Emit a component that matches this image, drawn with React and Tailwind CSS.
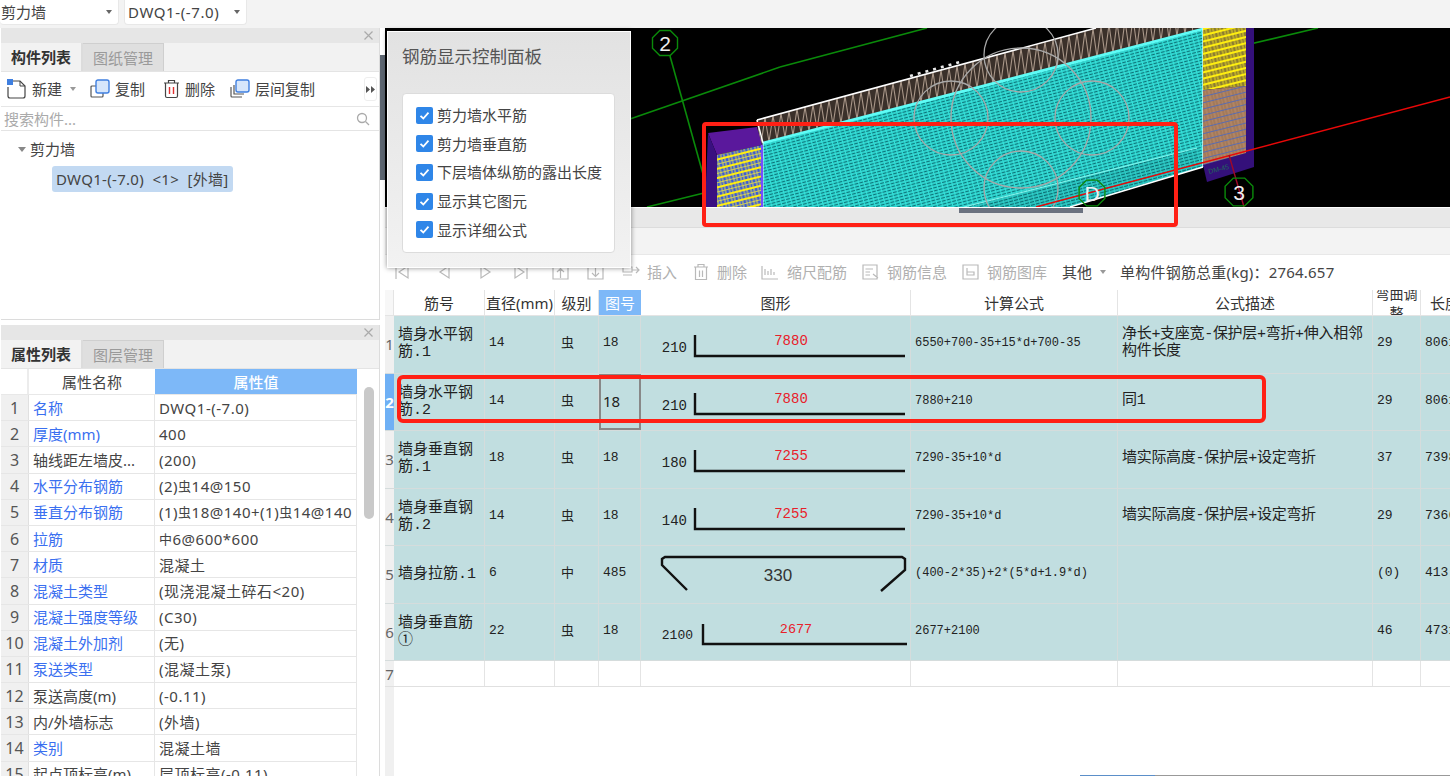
import React from "react";

const zig = () => {
  const pts = [];
  for (let i = 0; i < 110; i++) {
    const x = 372 + i * 4;
    const y = i % 2 === 0 ? 92 - (x - 372) * 0.271 : 115 - (x - 378) * 0.257;
    pts.push(`${x.toFixed(1)},${y.toFixed(1)}`);
  }
  return pts.join(" ");
};

const octagon = (cx, cy, r) => {
  const pts = [];
  for (let i = 0; i < 8; i++) {
    const a = Math.PI / 8 + (i * Math.PI) / 4;
    pts.push(`${(cx + r * Math.cos(a)).toFixed(1)},${(cy + r * Math.sin(a)).toFixed(1)}`);
  }
  return pts.join(" ");
};

function Canvas() {
  return (
    <svg width="1065" height="179" viewBox="0 0 1065 179" className="block bg-black">
      <defs>
        <pattern id="mesh" width="10" height="6" patternUnits="userSpaceOnUse" patternTransform="rotate(-15)">
          <rect width="10" height="6" fill="#0a7478" />
          <path d="M0 1H10M0 4H10" stroke="#3cf0e8" strokeWidth="1.5" />
          <path d="M2.5 0V6M7.5 0V6" stroke="#34e2da" strokeWidth="1.2" />
        </pattern>
        <pattern id="meshDark" width="10" height="6" patternUnits="userSpaceOnUse" patternTransform="rotate(-15)">
          <rect width="10" height="6" fill="#0a6c70" />
          <path d="M0 1H10M0 4H10" stroke="#34dcd6" strokeWidth="1.3" />
          <path d="M2.5 0V6M7.5 0V6" stroke="#2ecfc8" strokeWidth="1" />
        </pattern>
        <pattern id="yel" width="7" height="9" patternUnits="userSpaceOnUse" patternTransform="rotate(-14)">
          <rect width="7" height="9" fill="#3a5ad8" />
          <rect width="7" height="2" y="0" fill="#ffee10" />
          <path d="M0 5.5H7" stroke="#c8c860" strokeWidth="1" />
          <path d="M1 2V9M4 2V9" stroke="#e8e040" strokeWidth="1" />
        </pattern>
        <pattern id="yel2" width="7" height="6" patternUnits="userSpaceOnUse" patternTransform="rotate(-14)">
          <rect width="7" height="6" fill="#8c7c30" />
          <rect width="7" height="2" y="0" fill="#ffee10" />
          <path d="M2 2V6M5 2V6" stroke="#e8d820" strokeWidth="1" />
        </pattern>
        <pattern id="brown" width="7" height="6" patternUnits="userSpaceOnUse" patternTransform="rotate(-14)">
          <rect width="7" height="6" fill="#b08464" />
          <rect width="7" height="1" y="0" fill="#5a6cb0" />
          <path d="M2 1V6M5 1V6" stroke="#98704e" strokeWidth="1" />
        </pattern>
      </defs>

      <path d="M245 91L395 39" stroke="#0a8a0a" strokeWidth="1.6" fill="none" />
      <path d="M395 39L542 0" stroke="#0a8a0a" strokeWidth="1.6" fill="none" />
      <path d="M262 179L323 164" stroke="#0a8a0a" strokeWidth="1.6" fill="none" />
      <path d="M861 17L933 0" stroke="#0a8a0a" strokeWidth="1.6" fill="none" />
      <path d="M285 28L323 164" stroke="#0a8a0a" strokeWidth="1.6" fill="none" />

      <polygon points="372,92 711,0 818,0 818,2 378,115" fill="#3a302a" />
      <polyline points={zig()} fill="none" stroke="#a89688" strokeWidth="1.1" />
      <line x1="372" y1="92" x2="711" y2="0" stroke="#ffffff" strokeWidth="1.6" />
      <line x1="525" y1="48" x2="575" y2="34" stroke="#e8e8e8" strokeWidth="2.6" strokeDasharray="3 5" />

      <polygon points="378,115 818,2 818,139 685,179 378,179" fill="url(#mesh)" />
      <polygon points="579,179 812,120 818,139 685,179" fill="url(#meshDark)" />
      <line x1="579" y1="179" x2="812" y2="120" stroke="#7ff4ec" strokeWidth="1.2" />
      <line x1="378" y1="115" x2="818" y2="1" stroke="#5ffcf6" strokeWidth="2.8" />
      <line x1="818" y1="0" x2="818" y2="139" stroke="#d8ffff" strokeWidth="1.4" />
      <line x1="685" y1="179" x2="818" y2="139" stroke="#ffffff" strokeWidth="1.4" />
      <line x1="372" y1="92" x2="378" y2="115" stroke="#ffffff" strokeWidth="1.4" />
      <line x1="378" y1="115" x2="378" y2="179" stroke="#d0ffff" strokeWidth="1" />

      <polygon points="861,0 869,0 869,139 822,154 818,137" fill="#34107a" />
      <polygon points="818,0 861,0 861,58 818,62" fill="url(#yel2)" />
      <polygon points="818,62 861,58 861,125 818,137" fill="url(#brown)" />
      <text x="824" y="146" fontSize="7" fill="#1f6a5a" fontFamily="Liberation Sans, sans-serif" transform="rotate(-14 824 146)">DM-45</text>

      <polygon points="323,105 372,99 377,117 332,127" fill="#5a189c" />
      <polygon points="323,105 332,127 332,179 320,179" fill="#3a1080" />
      <polygon points="332,127 377,117 377,179 332,179" fill="url(#yel)" />
      <line x1="377" y1="117" x2="377" y2="179" stroke="#7a4cff" strokeWidth="2" />

      <g fill="none" stroke="#a8a8a8" strokeWidth="1.3">
        <circle cx="636" cy="27" r="37" />
        <circle cx="566" cy="90" r="37" />
        <circle cx="707" cy="90" r="37" />
        <circle cx="636" cy="160" r="37" />
        <circle cx="636" cy="90" r="70" />
      </g>

      <line x1="651" y1="179" x2="1065" y2="69" stroke="#e80808" strokeWidth="1.4" />
      <line x1="844" y1="127" x2="859" y2="179" stroke="#a00828" strokeWidth="1.4" />

      <polygon points={octagon(280, 15, 13.5)} fill="none" stroke="#0a8a0a" strokeWidth="1.4" />
      <polygon points={octagon(854, 164, 15)} fill="none" stroke="#0a8a0a" strokeWidth="1.4" />
      <polygon points={octagon(707, 165, 14)} fill="none" stroke="#0a8a0a" strokeWidth="1.4" />
      <g fill="#f0f0f0" fontFamily="Liberation Sans, sans-serif" fontSize="21" textAnchor="middle">
        <text x="280" y="23">2</text>
        <text x="854" y="172">3</text>
        <text x="707" y="173">D</text>
      </g>
    </svg>
  );
}

const R = ({ c = "虫" }) => <span className="text-[13px] align-[2px]">{c}</span>;

const props = [
  ["1", "名称", "DWQ1-(-7.0)", true],
  ["2", "厚度(mm)", "400", true],
  ["3", "轴线距左墙皮...", "(200)", false],
  ["4", "水平分布钢筋", <>(2)<R />14@150</>, true],
  ["5", "垂直分布钢筋", <>(1)<R />18@140+(1)<R />14@140</>, true],
  ["6", "拉筋", <><R c="中" />6@600*600</>, true],
  ["7", "材质", "混凝土", true],
  ["8", "混凝土类型", "(现浇混凝土碎石<20)", true],
  ["9", "混凝土强度等级", "(C30)", true],
  ["10", "混凝土外加剂", "(无)", true],
  ["11", "泵送类型", "(混凝土泵)", true],
  ["12", "泵送高度(m)", "(-0.11)", false],
  ["13", "内/外墙标志", "(外墙)", false],
  ["14", "类别", "混凝土墙", true],
  ["15", "起点顶标高(m)", "层顶标高(-0.11)", false],
];

const Shape = ({ a, b, red, second }) => (
  <svg width="270" height="57" viewBox="0 0 270 57" className="block">
    <path d={second ? "M62 20V40H266" : "M54 19V40H264"} fill="none" stroke="#111" strokeWidth="2.4" />
    <text x={second ? 52 : 46} y={second ? 35 : 36} textAnchor="end" fontSize={second ? 13 : 14} fill="#222" fontFamily="Liberation Mono, monospace">{a}</text>
    <text x={second ? 155 : 150} y={second ? 29 : 29} textAnchor="middle" fontSize={second ? 13.5 : 14} fill="#e8202a" fontFamily="Liberation Mono, monospace">{red}</text>
  </svg>
);

const Tie = () => (
  <svg width="270" height="57" viewBox="0 0 270 57" className="block">
    <path d="M46 44L21 19V13L24 11H261L264 13V24L240 45" fill="none" stroke="#111" strokeWidth="2.4" />
    <text x="137" y="35" textAnchor="middle" fontSize="17" fill="#333" fontFamily="Liberation Sans, sans-serif">330</text>
  </svg>
);

const rows = [
  { n: "1", name: "墙身水平钢筋.1", d: "14", g: "虫", t: "18", shape: <Shape a="210" red="7880" />, f: "6550+700-35+15*d+700-35", desc: "净长+支座宽-保护层+弯折+伸入相邻构件长度", b: "29", l: "8061" },
  { n: "2", name: "墙身水平钢筋.2", d: "14", g: "虫", t: "18", shape: <Shape a="210" red="7880" />, f: "7880+210", desc: "同1", b: "29", l: "8061", sel: true },
  { n: "3", name: "墙身垂直钢筋.1", d: "18", g: "虫", t: "18", shape: <Shape a="180" red="7255" />, f: "7290-35+10*d", desc: "墙实际高度-保护层+设定弯折", b: "37", l: "7398" },
  { n: "4", name: "墙身垂直钢筋.2", d: "14", g: "虫", t: "18", shape: <Shape a="140" red="7255" />, f: "7290-35+10*d", desc: "墙实际高度-保护层+设定弯折", b: "29", l: "7366" },
  { n: "5", name: "墙身拉筋.1", d: "6", g: "中", t: "485", shape: <Tie />, f: "(400-2*35)+2*(5*d+1.9*d)", desc: "", b: "(0)", l: "413" },
  { n: "6", name: "墙身垂直筋①", d: "22", g: "虫", t: "18", shape: <Shape a="2100" red="2677" second />, f: "2677+2100", desc: "", b: "46", l: "4731" },
];

const Check = ({ label }) => (
  <div className="flex items-center gap-[4px] h-[28.6px]">
    <span className="flex w-[17px] h-[17px] items-center justify-center rounded-[2px] bg-[#2f86e8]">
      <svg width="13" height="13" viewBox="0 0 13 13"><path d="M2.5 6.8L5.3 9.5L10.5 3.6" fill="none" stroke="#fff" strokeWidth="1.8" /></svg>
    </span>
    <span>{label}</span>
  </div>
);

const Tool = ({ icon, label, cls }) => (
  <div className={`flex items-center gap-[5px] ${cls}`}>
    {icon}
    <span>{label}</span>
  </div>
);

const Ic = ({ w = 16, children }) => (
  <svg width={w} height="18" viewBox={`0 0 ${w} 18`} fill="none" stroke="#b9b9b9" strokeWidth="1.2" className="block shrink-0">{children}</svg>
);

const Tabs = ({ a, b }) => (
  <div className="flex h-[29px] bg-[#f2f2f2] border-b border-[#e4e4e4]">
    <div className="w-[82px] flex items-center justify-center font-bold text-[#333] border-r-2 border-[#dcdcdc]">{a}</div>
    <div className="w-[81px] flex items-center justify-center text-[#9a9a9a] bg-[#dfdfdf] border-t border-r border-[#cfcfcf]">{b}</div>
  </div>
);

const CloseBar = () => (
  <div className="h-[15px] bg-[#e6e6e6] flex items-center justify-end pr-[6px]">
    <svg width="9" height="9" viewBox="0 0 9 9"><path d="M.5.5L8.5 8.5M8.5.5L.5 8.5" stroke="#aaa" strokeWidth="1.2" /></svg>
  </div>
);

const Arrow = ({ cls }) => <span className={`w-0 h-0 border-x-[3px] border-x-transparent border-t-[4px] border-t-[#666] ${cls}`} />;

export default function App() {
  return (
    <div className="relative w-[1450px] h-[776px] overflow-hidden bg-white text-[15px] leading-[20px] text-[#444] font-['Noto_Sans','Noto_Sans_CJK_SC',sans-serif]">
      {/* top bar */}
      <div className="h-[28px] bg-[#f3f3f3] flex gap-[5px] items-start">
        <div className="w-[119px] h-[25px] bg-white rounded-b-[4px] flex items-center justify-between pl-[1px] pr-[6px] border-r border-b border-[#e8e8e8]">
          <span>剪力墙</span><Arrow />
        </div>
        <div className="w-[123px] h-[25px] bg-white rounded-b-[4px] flex items-center justify-between pl-[3px] pr-[6px] border-x border-b border-[#e8e8e8]">
          <span className="tracking-[0.6px]">DWQ1-(-7.0)</span><Arrow />
        </div>
      </div>

      <div className="flex h-[748px]">
        {/* left column */}
        <div className="w-[385px] shrink-0 pl-[1px] pr-[5px] flex flex-col gap-[5px] bg-white">
          <div className="h-[292px] border-r border-b border-[#dcdcdc] flex flex-col shrink-0">
            <CloseBar />
            <Tabs a="构件列表" b="图纸管理" />
            <div className="h-[35px] flex items-center border-b border-[#e6e6e6] relative">
              <Tool cls="ml-[6px]" label="新建" icon={
                <svg width="20" height="20" viewBox="0 0 20 20" fill="none" className="block">
                  <path d="M3 2H13L18 7V17Q18 19 16 19H3Q1 19 1 17V8" stroke="#444" strokeWidth="1.2" />
                  <path d="M13 2V7H18" stroke="#444" strokeWidth="1" />
                  <rect x="0" y="0" width="6" height="6" fill="#3f7fe0" />
                </svg>} />
              <Arrow cls="ml-[8px] border-t-[#999]" />
              <Tool cls="ml-[14px]" label="复制" icon={
                <svg width="20" height="20" viewBox="0 0 20 20" fill="none" className="block">
                  <path d="M6 7H2Q1 7 1 8V17Q1 18 2 18H12Q13 18 13 17V14" stroke="#555" strokeWidth="1.2" />
                  <rect x="6" y="1" width="13" height="13" rx="2" fill="#d6e6fb" stroke="#3f7fe0" strokeWidth="1.4" />
                </svg>} />
              <Tool cls="ml-[18px]" label="删除" icon={
                <svg width="17" height="20" viewBox="0 0 17 20" fill="none" className="block">
                  <path d="M1 4H16M5.5 4V1.5H11.5V4" stroke="#444" strokeWidth="1.2" />
                  <path d="M2.5 4V17Q2.5 18.5 4 18.5H13Q14.5 18.5 14.5 17V4" stroke="#444" strokeWidth="1.2" />
                  <path d="M6.5 8V15M10.5 8V15" stroke="#e03030" strokeWidth="1.4" />
                </svg>} />
              <Tool cls="ml-[15px]" label="层间复制" icon={
                <svg width="20" height="20" viewBox="0 0 20 20" fill="none" className="block">
                  <path d="M1 8V17Q1 18 2 18H12" stroke="#555" strokeWidth="1.2" />
                  <path d="M4 6V15H14" stroke="#555" strokeWidth="1.2" />
                  <rect x="6" y="1" width="13" height="12" rx="2" fill="#d6e6fb" stroke="#3f7fe0" strokeWidth="1.4" />
                </svg>} />
              <div className="ml-auto mr-[2px] w-[13px] h-[24px] bg-white border border-[#eee] rounded-[3px] flex items-center justify-center">
                <svg width="9" height="7" viewBox="0 0 9 7"><path d="M0 0L4 3.5L0 7ZM5 0L9 3.5L5 7Z" fill="#555" /></svg>
              </div>
            </div>
            <div className="h-[24px] flex items-center justify-between pl-[3px] pr-[9px] border-b border-[#e4e4e4] text-[#aaa]">
              <span>搜索构件...</span>
              <svg width="14" height="14" viewBox="0 0 14 14" fill="none"><circle cx="6" cy="6" r="4.5" stroke="#aaa" strokeWidth="1.3" /><path d="M9.5 9.5L13 13" stroke="#aaa" strokeWidth="1.3" /></svg>
            </div>
            <div className="flex-1 pt-[8px]">
              <div className="flex items-center h-[20px] pl-[17px] gap-[4px]">
                <Arrow cls="border-x-[4px] border-t-[5px] border-t-[#888]" />
                <span>剪力墙</span>
              </div>
              <div className="mt-[7px] ml-[51px] w-[181px] h-[26px] bg-[#c2d9f2] rounded-[3px] flex items-center pl-[4px] whitespace-pre tracking-[0.3px]">DWQ1-(-7.0)  &lt;1&gt;  [外墙]</div>
            </div>
          </div>

          <div className="flex-1 min-h-0 border-r border-[#dcdcdc] flex flex-col overflow-hidden">
            <CloseBar />
            <Tabs a="属性列表" b="图层管理" />
            <div className="flex flex-1 min-h-0">
              <div className="w-[356px] shrink-0">
                <div className="flex h-[26px] border-b border-[#e8e8e8]">
                  <div className="w-[28px] border-r-2 border-[#ececec]" />
                  <div className="w-[126px] flex items-center justify-center">属性名称</div>
                  <div className="flex-1 bg-[#7db8f8] text-white flex items-center justify-center font-medium">属性值</div>
                </div>
                {props.map(([n, k, v, link]) => (
                  <div key={n} className="flex h-[26.2px] border-b border-[#e6e6e6]">
                    <div className="w-[28px] shrink-0 bg-[#f0f0f0] border-r border-[#e0e0e0] flex items-center justify-center text-[#555] text-[16px]">{n}</div>
                    <div className={`w-[126px] shrink-0 pl-[4px] flex items-center border-r border-[#e6e6e6] whitespace-nowrap overflow-hidden ${link ? "text-[#3a6ff0]" : "text-[#444]"}`}>{k}</div>
                    <div className="flex-1 pl-[4px] flex items-center whitespace-nowrap overflow-hidden border-r border-[#e6e6e6] tracking-[0.5px]">{v}</div>
                  </div>
                ))}
              </div>
              <div className="flex-1 pl-[7px] pt-[18px]">
                <div className="w-[10px] h-[132px] rounded-[5px] bg-[#c9c9c9]" />
              </div>
            </div>
          </div>
        </div>

        {/* right column */}
        <div className="flex-1 min-w-0 flex flex-col">
          <Canvas />
          <div className="h-[20px] mt-[1px] bg-[#e8e8e8] border-b border-[#dcdcdc] shrink-0">
            <div className="ml-[574px] w-[124px] h-[5px] bg-[#6b7280]" />
          </div>
          <div className="h-[26px] bg-[#f3f3f3] shrink-0" />
          <div className="h-[36px] shrink-0 flex items-center pb-[1px] border-t border-[#e8e8e8] bg-white text-[#b0b0b0] whitespace-nowrap">
            <div className="ml-[10px]"><Ic w={14}><path d="M1 2V16M13 3L4 9L13 15Z" /></Ic></div>
            <div className="ml-[28px]"><Ic w={14}><path d="M12 3L3 9L12 15Z" /></Ic></div>
            <div className="ml-[28px]"><Ic w={14}><path d="M2 3L11 9L2 15Z" /></Ic></div>
            <div className="ml-[21px]"><Ic w={14}><path d="M13 2V16M1 3L10 9L1 15Z" /></Ic></div>
            <div className="ml-[24px]"><Ic w={17}><path d="M1 3H16V16H1ZM8.5 15V6M5 9L8.5 5.5L12 9" /></Ic></div>
            <div className="ml-[18px]"><Ic w={17}><path d="M1 3H16V16H1ZM8.5 4V13M5 10L8.5 13.5L12 10" /></Ic></div>
            <Tool cls="ml-[18px]" label="插入" icon={<Ic w={20}><path d="M1 4H10V9H1ZM1 12H10M10 7H17M14 4L17 7L14 10" /></Ic>} />
            <Tool cls="ml-[16px]" label="删除" icon={<Ic w={19}><path d="M1 4H15M5 4V1.5H11V4M2.5 4V16.5H13.5V4M6.5 7.5V14M9.5 7.5V14" /></Ic>} />
            <Tool cls="ml-[14px]" label="缩尺配筋" icon={<Ic w={21}><path d="M1 3V16H17M4 12V6M7 12V8M10 12V6M13 12V9" /></Ic>} />
            <Tool cls="ml-[15px]" label="钢筋信息" icon={<Ic w={20}><path d="M1 2H15V16H1ZM3.5 6H11M3.5 9H8M3.5 12H8M11 11L16 15" /></Ic>} />
            <Tool cls="ml-[15px]" label="钢筋图库" icon={<Ic w={20}><path d="M1 2H16V16H1ZM5 5V12H12V9H5" /></Ic>} />
            <span className="ml-[15px] text-[#444]">其他</span>
            <Arrow cls="ml-[8px] border-t-[#999]" />
            <span className="ml-[14px] text-[#444] tracking-[0.2px]">单构件钢筋总重(kg)：2764.657</span>
          </div>

          {/* rebar table */}
          <div className="flex-1 min-h-0 flex flex-col bg-white overflow-hidden text-[#333]">
            <div className="flex h-[26px] shrink-0 border-b border-[#e4e4e4] whitespace-nowrap">
              <div className="w-[9px] shrink-0 border-r border-[#e4e4e4] bg-[#f7f7f7]" />
              <div className="w-[91px] shrink-0 border-r border-[#e4e4e4] flex items-center justify-center">筋号</div>
              <div className="w-[70px] shrink-0 border-r border-[#e4e4e4] flex items-center justify-center">直径(mm)</div>
              <div className="w-[44px] shrink-0 border-r border-[#e4e4e4] flex items-center justify-center">级别</div>
              <div className="w-[42px] shrink-0 bg-[#7db8f8] text-white flex items-center justify-center">图号</div>
              <div className="w-[270px] shrink-0 border-r border-[#e4e4e4] flex items-center justify-center">图形</div>
              <div className="w-[207px] shrink-0 border-r border-[#e4e4e4] flex items-center justify-center">计算公式</div>
              <div className="w-[255px] shrink-0 border-r border-[#e4e4e4] flex items-center justify-center">公式描述</div>
              <div className="w-[48px] shrink-0 border-r border-[#e4e4e4] overflow-hidden flex items-center justify-center whitespace-normal text-center leading-[19px] text-[14px]">弯曲调整</div>
              <div className="flex-1 pl-[9px] overflow-hidden flex items-center">长度(mm)</div>
            </div>
            {rows.map((r) => (
              <div key={r.n} className="flex h-[57.5px] shrink-0 bg-[#c1dee0] border-b border-[#d5dcdc] text-[#222] font-['Liberation_Mono','Noto_Sans_CJK_SC',monospace] text-[12px]">
                <div className={`w-[9px] shrink-0 flex items-center justify-center text-[15px] font-['Noto_Sans',sans-serif] ${r.sel ? "bg-[#6fb0f5] text-white font-bold" : "bg-[#f0f0f0] text-[#666]"}`}>{r.n}</div>
                <div className="w-[91px] shrink-0 pl-[4px] pr-[2px] flex items-center border-r border-[#d5dcdc] text-[15px] leading-[17px] break-all">{r.name}</div>
                <div className="w-[70px] shrink-0 pl-[4px] pb-[2px] flex items-center border-r border-[#d5dcdc] text-[13px]">{r.d}</div>
                <div className="w-[44px] shrink-0 pl-[6px] flex items-center border-r border-[#d5dcdc] text-[13px]">{r.g}</div>
                <div className={`w-[42px] shrink-0 pl-[4px] pb-[2px] flex items-center border-r border-[#d5dcdc] ${r.sel ? "text-[15px] font-['Noto_Sans',sans-serif] outline-2 -outline-offset-2 outline-[#888]" : "text-[13px]"}`}>{r.t}</div>
                <div className="w-[270px] shrink-0 border-r border-[#d5dcdc] overflow-hidden">{r.shape}</div>
                <div className="w-[207px] shrink-0 pl-[4px] pb-[2px] flex items-center border-r border-[#d5dcdc] whitespace-nowrap">{r.f}</div>
                <div className="w-[255px] shrink-0 pl-[4px] pb-[2px] flex items-center border-r border-[#d5dcdc] text-[15px] leading-[17px] tracking-[-0.3px]">{r.desc}</div>
                <div className="w-[48px] shrink-0 pl-[4px] pb-[2px] flex items-center border-r border-[#d5dcdc] text-[13px]">{r.b}</div>
                <div className="flex-1 pl-[4px] pb-[2px] flex items-center overflow-hidden text-[13px]">{r.l}</div>
              </div>
            ))}
            <div className="flex h-[26px] shrink-0 bg-white border-b border-[#e0e0e0]">
              <div className="w-[9px] shrink-0 bg-[#f0f0f0] flex items-center justify-center text-[#666]">7</div>
              <div className="w-[91px] shrink-0 border-r border-[#e4e4e4]" />
              <div className="w-[70px] shrink-0 border-r border-[#e4e4e4]" />
              <div className="w-[44px] shrink-0 border-r border-[#e4e4e4]" />
              <div className="w-[42px] shrink-0 border-r border-[#e4e4e4]" />
              <div className="w-[270px] shrink-0 border-r border-[#e4e4e4]" />
              <div className="w-[207px] shrink-0 border-r border-[#e4e4e4]" />
              <div className="w-[255px] shrink-0 border-r border-[#e4e4e4]" />
              <div className="w-[48px] shrink-0 border-r border-[#e4e4e4]" />
            </div>
            <div className="flex-1 flex">
              <div className="w-[9px] bg-[#f0f0f0]" />
            </div>
          </div>
        </div>
      </div>

      {/* overlays */}
      <div className="absolute left-[380px] top-[55px] w-[5px] h-[125px] bg-[#5c6570]" />
      <div className="absolute left-[1080px] top-[775px] w-[370px] h-[1px] bg-[#999]"><div className="w-[75px] h-[1px] bg-[#5b8fc9]" /></div>

      <div className="absolute left-[387px] top-[31px] w-[244px] h-[237px] bg-linear-to-b from-[#e2e2e2] to-[#f2f2f2] border border-white shadow-[0_0_5px_rgba(0,0,0,0.45)] pl-[14px] pt-[12px]">
        <div className="text-[17.5px] leading-[24px] text-[#555]">钢筋显示控制面板</div>
        <div className="mt-[25px] w-[213px] h-[160px] bg-white rounded-[4px] border border-[#dcdcdc] pl-[13px] pt-[7px] text-[#444]">
          <Check label="剪力墙水平筋" />
          <Check label="剪力墙垂直筋" />
          <Check label="下层墙体纵筋的露出长度" />
          <Check label="显示其它图元" />
          <Check label="显示详细公式" />
        </div>
      </div>

      <div className="absolute left-[702px] top-[122px] w-[476px] h-[105px] border-4 border-[#ff2015] rounded-[4px]" />
      <div className="absolute left-[397px] top-[375px] w-[869px] h-[48px] border-4 border-[#ff2015] rounded-[6px]" />
    </div>
  );
}
